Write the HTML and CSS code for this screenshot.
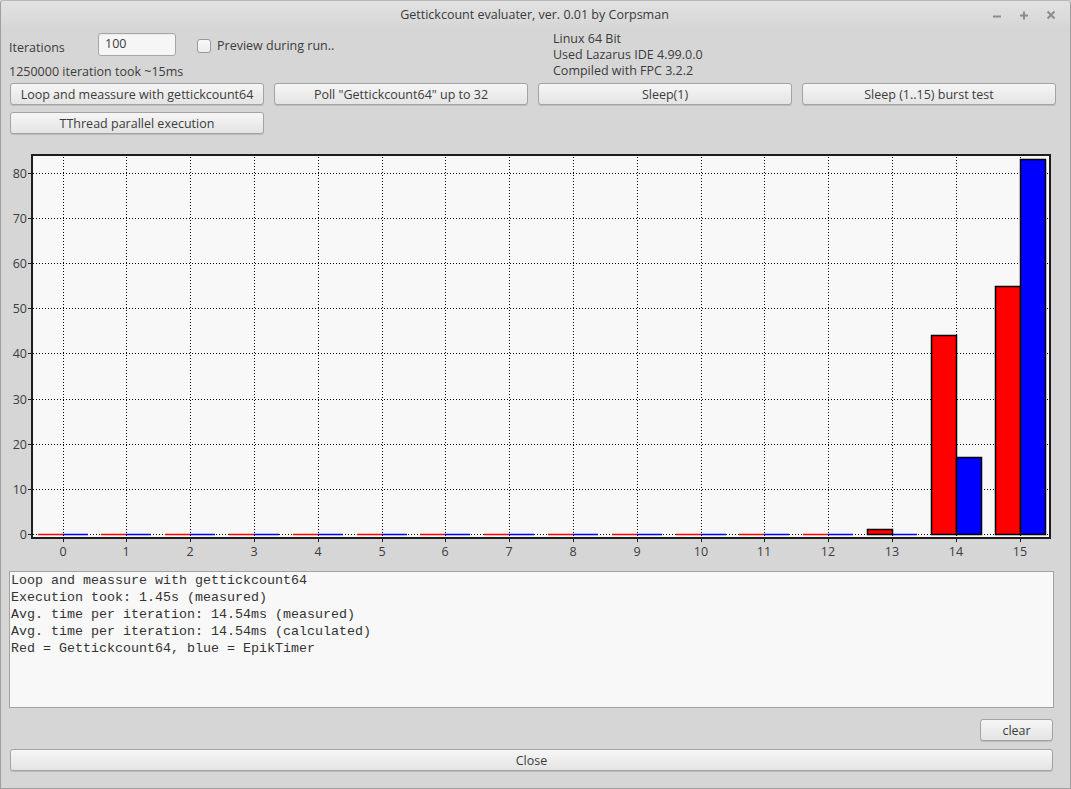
FILE: index.html
```html
<!DOCTYPE html>
<html>
<head>
<meta charset="utf-8">
<title>Gettickcount evaluater</title>
<link rel="stylesheet" href="styles.css">
</head>
<body>
<div class="window">
  <div class="titlebar">
    <span class="title">Gettickcount evaluater, ver. 0.01 by Corpsman</span>
    <div class="winctl">
      <svg class="ctl" width="12" height="12" viewBox="0 0 12 12"><path d="M2 7.5H10" stroke="#8c8c8c" stroke-width="2"/></svg>
      <svg class="ctl" width="12" height="12" viewBox="0 0 12 12"><path d="M2 6.5H10M6 2.5V10.5" stroke="#8c8c8c" stroke-width="2"/></svg>
      <svg class="ctl" width="12" height="12" viewBox="0 0 12 12"><path d="M2.5 2.5L9.5 9.5M9.5 2.5L2.5 9.5" stroke="#8c8c8c" stroke-width="2"/></svg>
    </div>
  </div>

  <div class="top">
    <div class="left">
      <div class="row1">
        <span class="lbl-iter">Iterations</span>
        <div class="edit">100</div>
        <span class="checkbox"></span>
        <span class="lbl-prev">Preview during run..</span>
      </div>
      <div class="took">1250000 iteration took ~15ms</div>
    </div>
    <div class="info">
      <div>Linux 64 Bit</div>
      <div>Used Lazarus IDE 4.99.0.0</div>
      <div>Compiled with FPC 3.2.2</div>
    </div>
  </div>

  <div class="btnrow">
    <div class="btn">Loop and meassure with gettickcount64</div>
    <div class="btn">Poll "Gettickcount64" up to 32</div>
    <div class="btn">Sleep(1)</div>
    <div class="btn">Sleep (1..15) burst test</div>
  </div>
  <div class="btnrow row2">
    <div class="btn">TThread parallel execution</div>
  </div>

  <div class="chart">
    <svg width="1069" height="425" viewBox="1 140 1069 425">
      <rect x="33" y="156" width="1016" height="381" fill="#f8f8f8"/>
      <g stroke="#000" stroke-width="1" stroke-dasharray="1 2" fill="none">
        <path d="M33 534.5H1049M33 489.5H1049M33 444.5H1049M33 399.5H1049M33 353.5H1049M33 308.5H1049M33 263.5H1049M33 218.5H1049M33 173.5H1049"/>
        <path d="M63.5 157V537M126.5 157V537M190.5 157V537M254.5 157V537M318.5 157V537M382.5 157V537M445.5 157V537M509.5 157V537M573.5 157V537M637.5 157V537M701.5 157V537M764.5 157V537M828.5 157V537M892.5 157V537M956.5 157V537M1020.5 157V537"/>
      </g>
      <g stroke="#ff0000" stroke-width="1.3">
        <path d="M38 534.5H63M101 534.5H126M165 534.5H190M229 534.5H254M293 534.5H318M357 534.5H382M420 534.5H445M484 534.5H509M548 534.5H573M612 534.5H637M676 534.5H701M739 534.5H764M803 534.5H828"/>
      </g>
      <g stroke="#0000ff" stroke-width="1.3">
        <path d="M63 534.5H88M126 534.5H151M190 534.5H215M254 534.5H279M318 534.5H343M382 534.5H407M445 534.5H470M509 534.5H534M573 534.5H598M637 534.5H662M701 534.5H726M764 534.5H789M828 534.5H853M892 534.5H917"/>
      </g>
      <g stroke="#000" stroke-width="1.5">
        <rect x="867.5" y="529.5" width="25" height="5" fill="#ff0000"/>
        <rect x="931.5" y="335.5" width="25" height="199" fill="#ff0000"/>
        <rect x="956.5" y="457.5" width="25" height="77" fill="#0000ff"/>
        <rect x="995.5" y="286.5" width="25" height="248" fill="#ff0000"/>
        <rect x="1020.5" y="159.5" width="25" height="375" fill="#0000ff"/>
      </g>
      <rect x="32" y="155" width="1018" height="383" fill="none" stroke="#1e1e1e" stroke-width="2"/>
      <g stroke="#1e1e1e" stroke-width="1">
        <path d="M28 534.5H32M28 489.5H32M28 444.5H32M28 399.5H32M28 353.5H32M28 308.5H32M28 263.5H32M28 218.5H32M28 173.5H32"/>
        <path d="M63.5 538V542M126.5 538V542M190.5 538V542M254.5 538V542M318.5 538V542M382.5 538V542M445.5 538V542M509.5 538V542M573.5 538V542M637.5 538V542M701.5 538V542M764.5 538V542M828.5 538V542M892.5 538V542M956.5 538V542M1020.5 538V542"/>
      </g>
      <g class="axis" text-anchor="end">
        <text x="27" y="539">0</text>
        <text x="27" y="494">10</text>
        <text x="27" y="449">20</text>
        <text x="27" y="404">30</text>
        <text x="27" y="358">40</text>
        <text x="27" y="313">50</text>
        <text x="27" y="268">60</text>
        <text x="27" y="223">70</text>
        <text x="27" y="178">80</text>
      </g>
      <g class="axis" text-anchor="middle">
        <text x="63" y="556">0</text>
        <text x="126" y="556">1</text>
        <text x="190" y="556">2</text>
        <text x="254" y="556">3</text>
        <text x="318" y="556">4</text>
        <text x="382" y="556">5</text>
        <text x="445" y="556">6</text>
        <text x="509" y="556">7</text>
        <text x="573" y="556">8</text>
        <text x="637" y="556">9</text>
        <text x="701" y="556">10</text>
        <text x="764" y="556">11</text>
        <text x="828" y="556">12</text>
        <text x="892" y="556">13</text>
        <text x="956" y="556">14</text>
        <text x="1020" y="556">15</text>
      </g>
    </svg>
  </div>

  <div class="memo">
    <div>Loop and meassure with gettickcount64</div>
    <div>Execution took: 1.45s (measured)</div>
    <div>Avg. time per iteration: 14.54ms (measured)</div>
    <div>Avg. time per iteration: 14.54ms (calculated)</div>
    <div>Red = Gettickcount64, blue = EpikTimer</div>
  </div>

  <div class="clearrow">
    <div class="btn btn-clear">clear</div>
  </div>
  <div class="closerow">
    <div class="btn btn-close">Close</div>
  </div>
</div>
</body>
</html>
```

FILE: styles.css
```css
* { box-sizing: border-box; }
html, body {
  margin: 0;
  padding: 0;
  background: #d6d6d6;
}
body {
  font-family: "Open Sans", "DejaVu Sans", sans-serif;
  font-size: 12.5px;
  color: #3c3c3c;
}
.window {
  width: 1071px;
  height: 789px;
  border: 1px solid #9e9e9e;
  border-top-color: #b8b8b8;
  border-radius: 4px 4px 0 0;
  background: #d6d6d6;
  overflow: hidden;
}
.titlebar {
  height: 27px;
  position: relative;
  display: flex;
  align-items: center;
  justify-content: center;
  background: linear-gradient(#e2e2e2, #d6d6d6);
}
.title {
  font-size: 12.5px;
  color: #3a3a3a;
  margin-left: -2px;
}
.winctl {
  position: absolute;
  right: 13px;
  top: 8px;
  display: flex;
  gap: 15px;
}
.ctl { display: block; }

.top {
  height: 55px;
  display: flex;
}
.left {
  width: 544px;
  padding-left: 8px;
  padding-top: 5px;
}
.row1 {
  height: 23px;
  display: flex;
  align-items: center;
}
.lbl-iter {
  width: 89px;
  padding-top: 5px;
}
.edit {
  width: 78px;
  height: 23px;
  border: 1px solid #a6a6a6;
  border-radius: 3px;
  background: #f6f6f6;
  padding-left: 6px;
  line-height: 20px;
  box-shadow: inset 0 1px 1px rgba(0,0,0,0.06);
}
.checkbox {
  width: 14px;
  height: 14px;
  margin-left: 21px;
  margin-top: 3px;
  border: 1px solid #9a9a9a;
  border-radius: 3px;
  background: linear-gradient(#f8f8f8, #ececec);
}
.lbl-prev {
  margin-left: 6px;
  padding-top: 2px;
}
.took {
  margin-top: 8px;
  line-height: 16px;
}
.info {
  padding-top: 3px;
  padding-left: 8px;
  line-height: 16px;
}

.btnrow {
  display: flex;
  gap: 10px;
  padding-left: 9px;
}
.row2 { margin-top: 7px; }
.btn {
  width: 254px;
  height: 22px;
  border: 1px solid #a3a3a3;
  border-radius: 3px;
  background: linear-gradient(#f6f6f6, #e4e4e4);
  box-shadow: 0 1px 0 rgba(0,0,0,0.12);
  display: flex;
  align-items: center;
  justify-content: center;
  white-space: nowrap;
}

.chart {
  margin-top: 6px;
  height: 425px;
}
.chart svg { display: block; }
.axis text {
  font-family: "Open Sans", "DejaVu Sans", sans-serif;
  font-size: 12.5px;
  fill: #3c3c3c;
}

.memo {
  margin-top: 6px;
  margin-left: 8px;
  width: 1045px;
  height: 137px;
  border: 1px solid #a2a2a2;
  background: #f8f8f8;
  padding: 0 1px;
  font-family: "Liberation Mono", "DejaVu Sans Mono", monospace;
  font-size: 13.33px;
  line-height: 17px;
  color: #333;
}

.clearrow {
  display: flex;
  justify-content: flex-end;
  margin-top: 11px;
  padding-right: 17px;
}
.btn-clear { width: 73px; }
.closerow {
  margin-top: 8px;
  padding-left: 9px;
}
.btn-close { width: 1043px; }
```
